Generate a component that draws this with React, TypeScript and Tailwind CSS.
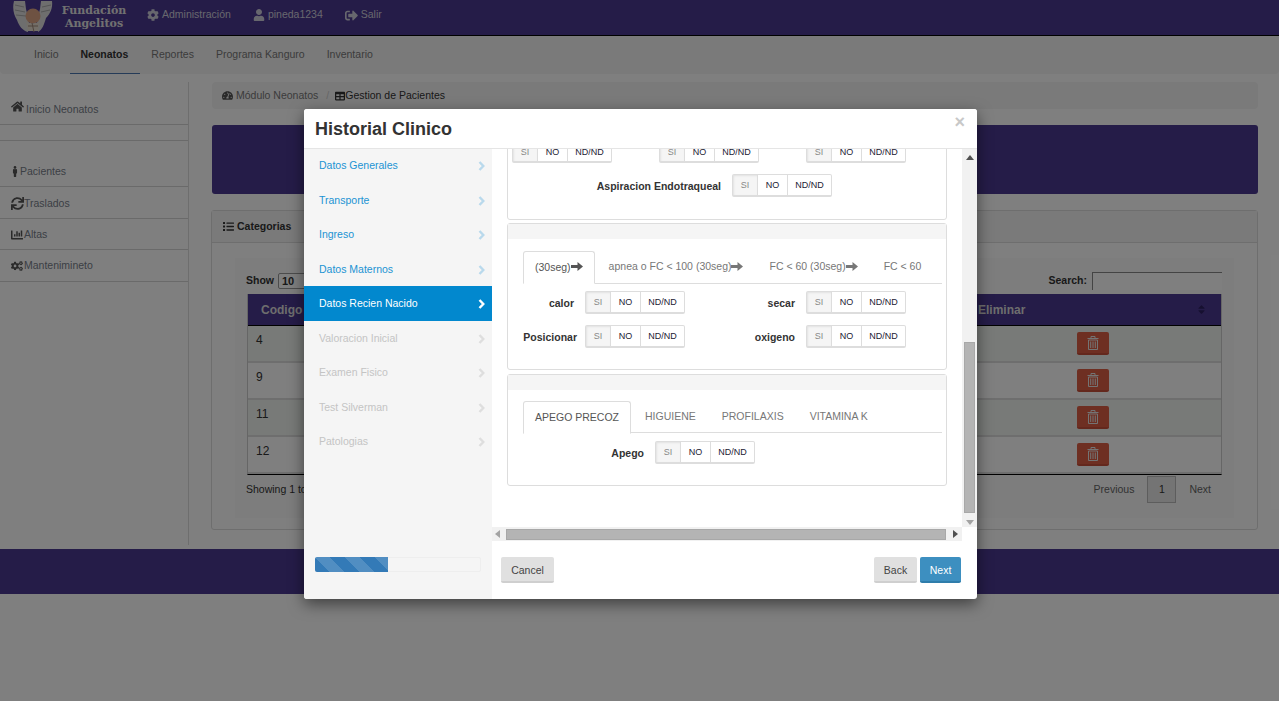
import type { ReactNode } from 'react';
import {
  FaChartBar,
  FaCog,
  FaCogs,
  FaHome,
  FaList,
  FaMale,
  FaSignOutAlt,
  FaSort,
  FaSync,
  FaTable,
  FaTachometerAlt,
  FaUser,
} from 'react-icons/fa';

const sans = "font-['Liberation_Sans',Arial,sans-serif]";

const Logo = () => (
  <svg width="40" height="34" viewBox="0 0 40 34" className="shrink-0">
    <path d="M1 0 C-1 8 1 14 4 19 C6 25 10 30 15 31 L16 20 L13 8 L12 0 Z" fill="#dcdcdc" />
    <path d="M39 0 C40 7 37 13 33 17 C31 24 29 29 25 31 L24 20 L27 8 L28 0 Z" fill="#dcdcdc" />
    <path d="M2 4 L11 6 M2 9 L12 11 M3 14 L13 15 M29 6 L38 4 M28 11 L37 9" stroke="#aaa" strokeWidth="1" />
    <ellipse cx="20" cy="15" rx="7.5" ry="7.5" fill="#dca585" />
    <path d="M13 20 C16 23 24 23 27 20 L25 30 L15 30 Z" fill="#e6dccf" />
    <path d="M15 25 L25 25 M19 22 L21 31" stroke="#a08878" strokeWidth="1" />
  </svg>
);

const TrashIcon = () => (
  <svg width="12" height="14" viewBox="0 0 12 14" fill="none" stroke="#e8e8e8" strokeWidth="1">
    <path d="M0.5 2.5 H11.5 M4 2.5 V0.5 H8 V2.5" />
    <path d="M1.5 4 H10.5 V13.5 H1.5 Z" />
    <path d="M3.7 5.5 V12 M6 5.5 V12 M8.3 5.5 V12" />
  </svg>
);

const Chevron = ({ color }: { color: string }) => (
  <svg width="7" height="10" viewBox="0 0 7 10" fill="none" stroke={color} strokeWidth="2.4">
    <path d="M1.5 1 L5.3 5 L1.5 9" />
  </svg>
);

const TopLink = ({ icon, label, className }: { icon: ReactNode; label: string; className: string }) => (
  <span className={`flex items-center text-[10.5px] text-[#cfcfdc] ${className}`}>
    {icon}
    {label}
  </span>
);

const Header = () => (
  <div className="h-[36px] bg-[#4b3890] border-b border-black flex items-center overflow-hidden">
    <div className="ml-[13px] w-[40px]">
      <Logo />
    </div>
    <div className="ml-[7px] w-[68px] text-center font-['DejaVu_Serif',serif] font-bold text-[11px] leading-[13px] text-[#e2e2e2] -mt-[1px]">
      Fundación
      <br />
      Angelitos
    </div>
    <TopLink className="ml-[19px] -mt-[5px]" icon={<FaCog className="text-[12px] mr-[3px]" />} label="Administración" />
    <TopLink className="ml-[22px] -mt-[5px]" icon={<FaUser className="text-[12px] mr-[3px]" />} label="pineda1234" />
    <TopLink className="ml-[22px] -mt-[5px]" icon={<FaSignOutAlt className="text-[13px] mr-[3px]" />} label="Salir" />
  </div>
);

const Nav = () => (
  <div className="h-[38px] bg-[#f5f5f5] flex pl-[23px] text-[10.5px] text-[#777] leading-[36px] rounded-b">
    <span className="px-[11px]">Inicio</span>
    <span className="pl-[11px] pr-[12px] font-bold text-[#333] border-b border-[#4a76b0] h-[38px]">Neonatos</span>
    <span className="px-[11px]">Reportes</span>
    <span className="px-[11px]">Programa Kanguro</span>
    <span className="px-[11px]">Inventario</span>
  </div>
);

const SideItem = ({ className, children }: { className: string; children?: ReactNode }) => (
  <div className={`border-b border-[#d4d4d4] pl-[11px] flex text-[10.5px] text-[#77808a] ${className}`}>
    {children}
  </div>
);

const PageSidebar = () => (
  <div className="w-[189px] shrink-0 mt-2 mb-[4px] border-r border-[#ddd]">
    <SideItem className="h-[43px] items-end pb-[6px]">
      <FaHome className="text-[13px] mr-[2px] text-[#555] mb-[5px]" />
      Inicio Neonatos
    </SideItem>
    <SideItem className="h-[16px]" />
    <SideItem className="h-[46px] items-end pb-[6px]">
      <FaMale className="text-[11px] w-[8px] mr-[1px] text-[#555] mb-[3px]" />
      Pacientes
    </SideItem>
    <SideItem className="h-[32px] items-center pt-[2px]">
      <FaSync className="text-[13px] text-[#555]" />
      Traslados
    </SideItem>
    <SideItem className="h-[31px] items-center pt-[1px]">
      <FaChartBar className="text-[12px] text-[#555] mr-[1px]" />
      Altas
    </SideItem>
    <SideItem className="h-[32px] items-center">
      <FaCogs className="text-[12px] text-[#555] mr-[1px]" />
      Mantenimineto
    </SideItem>
  </div>
);

const TableRow = ({ code, odd }: { code: string; odd: boolean }) => (
  <div className={`h-[37px] flex border-b-2 border-[#ddd] ${odd ? 'bg-[#f0f4f0]' : 'bg-white'}`}>
    <div className="w-[829px] pl-[8px] pt-[5px] text-[12px] text-[#333]">{code}</div>
    <div className="pt-[6px]">
      <div className="w-[32px] h-[23px] bg-[#dd5f45] border-b-2 border-[#c9503a] rounded-[2px] flex items-center justify-center">
        <TrashIcon />
      </div>
    </div>
  </div>
);

const PageContent = () => (
  <div className="flex-1 pl-[23px] pr-[21px] pt-2">
    <div className="h-[27px] bg-[#f5f5f5] rounded flex items-center pl-[10px] text-[10.5px] text-[#777]">
      <FaTachometerAlt className="text-[11px] text-[#555] mr-[3px]" />
      Módulo Neonatos
      <span className="ml-[8px] mr-[6px] text-[#ccc]">/</span>
      <FaTable className="text-[10px] text-[#333]" />
      <span className="text-[#333]">Gestion de Pacientes</span>
    </div>
    <div className="mt-[16px] h-[69px] bg-[#4b3890] rounded-[3px]" />
    <div className="-ml-px mt-[16px] h-[320px] border border-[#ddd] rounded-[3px]">
      <div className="h-[32px] bg-[#f5f5f5] border-b border-[#ddd] flex items-center pl-[11px] text-[10.5px] font-bold text-[#333]">
        <FaList className="text-[11px] mr-[3px]" />
        Categorias
      </div>
      <div className="mx-[23px] mt-[15px] h-[260px] bg-[#fafafa] pl-[11px] pr-[12px] pt-[14px] relative">
        <div className="flex items-center justify-between h-[18px]">
          <div className="flex items-center text-[10.5px] font-bold text-[#333]">
            Show
            <span className="ml-[4px] w-[40px] h-[16px] border border-[#999] bg-white rounded-[2px] pl-[3px] text-[11px] leading-[14px]">
              10
            </span>
          </div>
          <div className="flex items-center text-[10.5px] font-bold text-[#333]">
            Search:
            <span className="ml-[5px] w-[130px] h-[18px] border-t border-l border-[#888] bg-white" />
          </div>
        </div>
        <div className="mt-[4px] ml-px border-x border-[#ccc] border-b border-b-black">
          <div className="h-[32px] bg-[#4b3890] border-b border-black flex items-center text-[12px] font-bold text-[#dcdcdc]">
            <span className="w-[730px] pl-[13px]">Codigo</span>
            <span className="flex-1">Eliminar</span>
            <FaSort className="text-[11px] text-[#2d2060] mr-[14px]" />
          </div>
          <TableRow code="4" odd />
          <TableRow code="9" odd={false} />
          <TableRow code="11" odd />
          <TableRow code="12" odd={false} />
        </div>
        <div className="mt-[1px] flex justify-between items-start text-[10.5px] text-[#333]">
          <span className="pt-[6px]">Showing 1 to 4 of 4 entries</span>
          <div className="flex items-center text-[#666] pr-[11px]">
            <span>Previous</span>
            <span className="mx-[13px] w-[29px] h-[27px] border border-[#bbb] bg-[#e8e8e8] flex items-center justify-center text-[#333]">
              1
            </span>
            <span>Next</span>
          </div>
        </div>
      </div>
    </div>
  </div>
);

const WizardItem = ({ label, state }: { label: string; state: 'done' | 'active' | 'off' }) => {
  const text = state === 'active' ? 'bg-[#0288ce] text-white' : state === 'done' ? 'text-[#1b93d3]' : 'text-[#c4c4c4]';
  const chevron = state === 'active' ? '#ffffff' : state === 'done' ? '#b9d9ec' : '#dedede';
  return (
    <div className={`h-[34.5px] pt-[2px] flex items-center justify-between pl-[15px] pr-[7px] text-[10.5px] ${text}`}>
      {label}
      <Chevron color={chevron} />
    </div>
  );
};

// the first row is scrolled under the header, its labels sit a little lower
const Choice = ({ low }: { low?: boolean }) => {
  const nudge = low ? 'pt-[4px]' : 'pt-px';
  return (
    <div className="flex h-[23px] w-[100px] shrink-0 border border-[#ddd] border-b-2 rounded-[2px] text-[9px] text-[#223] bg-white">
      <span className={`w-[25px] bg-[#f5f5f5] border-r border-[#ddd] text-[#888] flex items-center justify-center shadow-[inset_1px_1px_2px_rgba(0,0,0,0.08)] ${nudge}`}>
        SI
      </span>
      <span className={`w-[30px] border-r border-[#ddd] flex items-center justify-center ${nudge}`}>NO</span>
      <span className={`flex-1 flex items-center justify-center ${nudge}`}>ND/ND</span>
    </div>
  );
};

const Field = ({ label, labelClass, className = '' }: { label: string; labelClass: string; className?: string }) => (
  <div className={`flex items-center ${className}`}>
    <span className={`pt-[2px] text-[10.5px] font-bold text-[#333] text-right whitespace-nowrap shrink-0 ${labelClass}`}>
      {label}
    </span>
    <Choice />
  </div>
);

const Tab = ({ active, children }: { active?: boolean; children: ReactNode }) => (
  <div
    className={
      active
        ? 'h-[33px] -mb-px px-[11px] flex items-center bg-white border border-[#ddd] border-b-white rounded-t-[3px] text-[10.5px] text-[#555]'
        : 'h-[32px] px-[12px] ml-[2px] flex items-center text-[10.5px] text-[#777]'
    }
  >
    {children}
  </div>
);

const Arrow = ({ dark }: { dark?: boolean }) => (
  <svg width="12" height="9" viewBox="0 0 12 9" className="-mt-[2px]">
    <path d="M0 3 H6.5 V0 L12 4.5 L6.5 9 V6 H0 Z" fill={dark ? '#555' : '#777'} />
  </svg>
);

const PanelHead = () => <div className="h-[15px] bg-[#f5f5f5]" />;

const FormPanels = () => (
  <div className="-mt-[19px] ml-[15px] w-[440px]">
    <div className="h-[90px] border border-[#ddd] rounded-[3px] pt-[9px]">
      <div className="flex pl-[4px] gap-[47px]">
        <Choice low />
        <Choice low />
        <Choice low />
      </div>
      <Field className="mt-[11px] ml-[88px]" label="Aspiracion Endotraqueal" labelClass="w-[125px] mr-[11px]" />
    </div>

    <div className="mt-[3px] h-[147px] border border-[#ddd] rounded-[3px]">
      <PanelHead />
      <div className="pl-[15px] pr-[4px] pt-[12px]">
        <div className="flex border-b border-[#ddd] h-[33px]">
          <Tab active>
            (30seg)
            <Arrow dark />
          </Tab>
          <Tab>
            apnea o FC &lt; 100 (30seg)
            <Arrow />
          </Tab>
          <Tab>
            FC &lt; 60 (30seg)
            <Arrow />
          </Tab>
          <Tab>FC &lt; 60</Tab>
        </div>
        <div className="flex mt-[7px]">
          <Field label="calor" labelClass="w-[51px] mr-[11px]" />
          <Field className="ml-[60px]" label="secar" labelClass="w-[50px] mr-[11px]" />
        </div>
        <div className="flex mt-[11px]">
          <Field label="Posicionar" labelClass="w-[54px] mr-[8px]" />
          <Field className="ml-[60px]" label="oxigeno" labelClass="w-[50px] mr-[11px]" />
        </div>
      </div>
    </div>

    <div className="mt-[4px] h-[112px] border border-[#ddd] rounded-[3px]">
      <PanelHead />
      <div className="pl-[15px] pr-[4px] pt-[11px]">
        <div className="flex border-b border-[#ddd] h-[32px]">
          <Tab active>APEGO PRECOZ</Tab>
          <Tab>HIGUIENE</Tab>
          <Tab>PROFILAXIS</Tab>
          <Tab>VITAMINA K</Tab>
        </div>
        <Field className="mt-[8px] ml-[75px]" label="Apego" labelClass="w-[46px] mr-[11px]" />
      </div>
    </div>
  </div>
);

const ScrollArrow = ({ dir }: { dir: 'up' | 'down' | 'left' | 'right' }) => {
  const points = { up: '0,5 4,0 8,5', down: '0,0 8,0 4,5', left: '5,0 5,8 0,4', right: '0,0 0,8 5,4' }[dir];
  const size = dir === 'up' || dir === 'down' ? 'w-[8px] h-[5px]' : 'w-[5px] h-[8px]';
  const fill = dir === 'down' || dir === 'left' ? '#a3a3a3' : '#505050';
  return (
    <svg viewBox={dir === 'up' || dir === 'down' ? '0 0 8 5' : '0 0 5 8'} className={size}>
      <polygon points={points} fill={fill} />
    </svg>
  );
};

const Modal = () => (
  <div className="absolute z-50 left-[304px] top-[109px] w-[673px] h-[490px] bg-white rounded-[3px] shadow-[0_5px_15px_rgba(0,0,0,0.5)] flex flex-col overflow-hidden">
    <div className="relative z-10 bg-white h-[40px] shrink-0 border-b border-[#e5e5e5] flex items-center justify-between pl-[11px] pr-[12px]">
      <span className="text-[18px] font-bold text-[#333] pt-[2px]">Historial Clinico</span>
      <span className="text-[18px] font-bold text-[#c8c8c8] -mt-[13px]">×</span>
    </div>
    <div className="flex flex-1 min-h-0">
      <div className="w-[188px] shrink-0 bg-[#f5f5f5] relative flex flex-col">
        <div className="-mt-px">
          <WizardItem label="Datos Generales" state="done" />
          <WizardItem label="Transporte" state="done" />
          <WizardItem label="Ingreso" state="done" />
          <WizardItem label="Datos Maternos" state="done" />
          <WizardItem label="Datos Recien Nacido" state="active" />
          <WizardItem label="Valoracion Inicial" state="off" />
          <WizardItem label="Examen Fisico" state="off" />
          <WizardItem label="Test Silverman" state="off" />
          <WizardItem label="Patologias" state="off" />
        </div>
        <div className="mt-auto mb-[27px] mx-[11px] h-[15px] border border-[#eee] rounded-[2px] bg-[#f5f5f5]">
          <div className="w-[73px] -mt-px -ml-px h-[15px] rounded-l-[2px] bg-[#337ab7] bg-[linear-gradient(45deg,rgba(255,255,255,0.15)_25%,transparent_25%,transparent_50%,rgba(255,255,255,0.15)_50%,rgba(255,255,255,0.15)_75%,transparent_75%,transparent)] bg-[length:30px_30px]" />
        </div>
      </div>
      <div className="flex-1 flex flex-col min-w-0">
        <div className="h-[392px] shrink-0 flex flex-col">
          <div className="flex flex-1 min-h-0">
            <div className="flex-1 overflow-hidden">
              <FormPanels />
            </div>
            <div className="w-[15px] shrink-0 bg-[#f1f1f1] flex flex-col items-center">
              <div className="mt-[6px]">
                <ScrollArrow dir="up" />
              </div>
              <div className="mt-auto w-[11px] h-[171px] bg-[#b4b4b4] border border-[#a8a8a8]" />
              <div className="mt-[7px] mb-[2px] flex">
                <ScrollArrow dir="down" />
              </div>
            </div>
          </div>
          <div className="h-[14px] shrink-0 mr-[15px] bg-[#f1f1f1] flex items-center pl-[3px] pr-[4px]">
            <ScrollArrow dir="left" />
            <div className="ml-[6px] mr-auto w-[440px] h-[11px] bg-[#b4b4b4] border border-[#a8a8a8]" />
            <ScrollArrow dir="right" />
          </div>
        </div>
        <div className="flex-1 flex items-start justify-between pl-[9px] pr-[16px] pt-[16px] text-[10.5px]">
          <span className="w-[53px] h-[26px] pt-[3px] bg-[#e0e0e0] border-b-2 border-[#cfcfcf] rounded-[2px] flex items-center justify-center text-[#444]">
            Cancel
          </span>
          <div className="flex gap-[3px]">
            <span className="w-[43px] h-[26px] pt-[3px] bg-[#e0e0e0] border-b-2 border-[#cfcfcf] rounded-[2px] flex items-center justify-center text-[#444]">
              Back
            </span>
            <span className="w-[41px] h-[26px] pt-[3px] bg-[#3d8fc0] border-b-2 border-[#2f7dab] rounded-[2px] flex items-center justify-center text-white">
              Next
            </span>
          </div>
        </div>
      </div>
    </div>
  </div>
);

export default function App() {
  return (
    <div className={`relative w-[1279px] h-[701px] overflow-hidden bg-white ${sans}`}>
      <Header />
      <Nav />
      <div className="flex h-[475px]">
        <PageSidebar />
        <PageContent />
      </div>
      <div className="h-[45px] bg-[#4b3890]" />
      <div className="absolute inset-0 z-40 bg-black/50" />
      <Modal />
    </div>
  );
}
